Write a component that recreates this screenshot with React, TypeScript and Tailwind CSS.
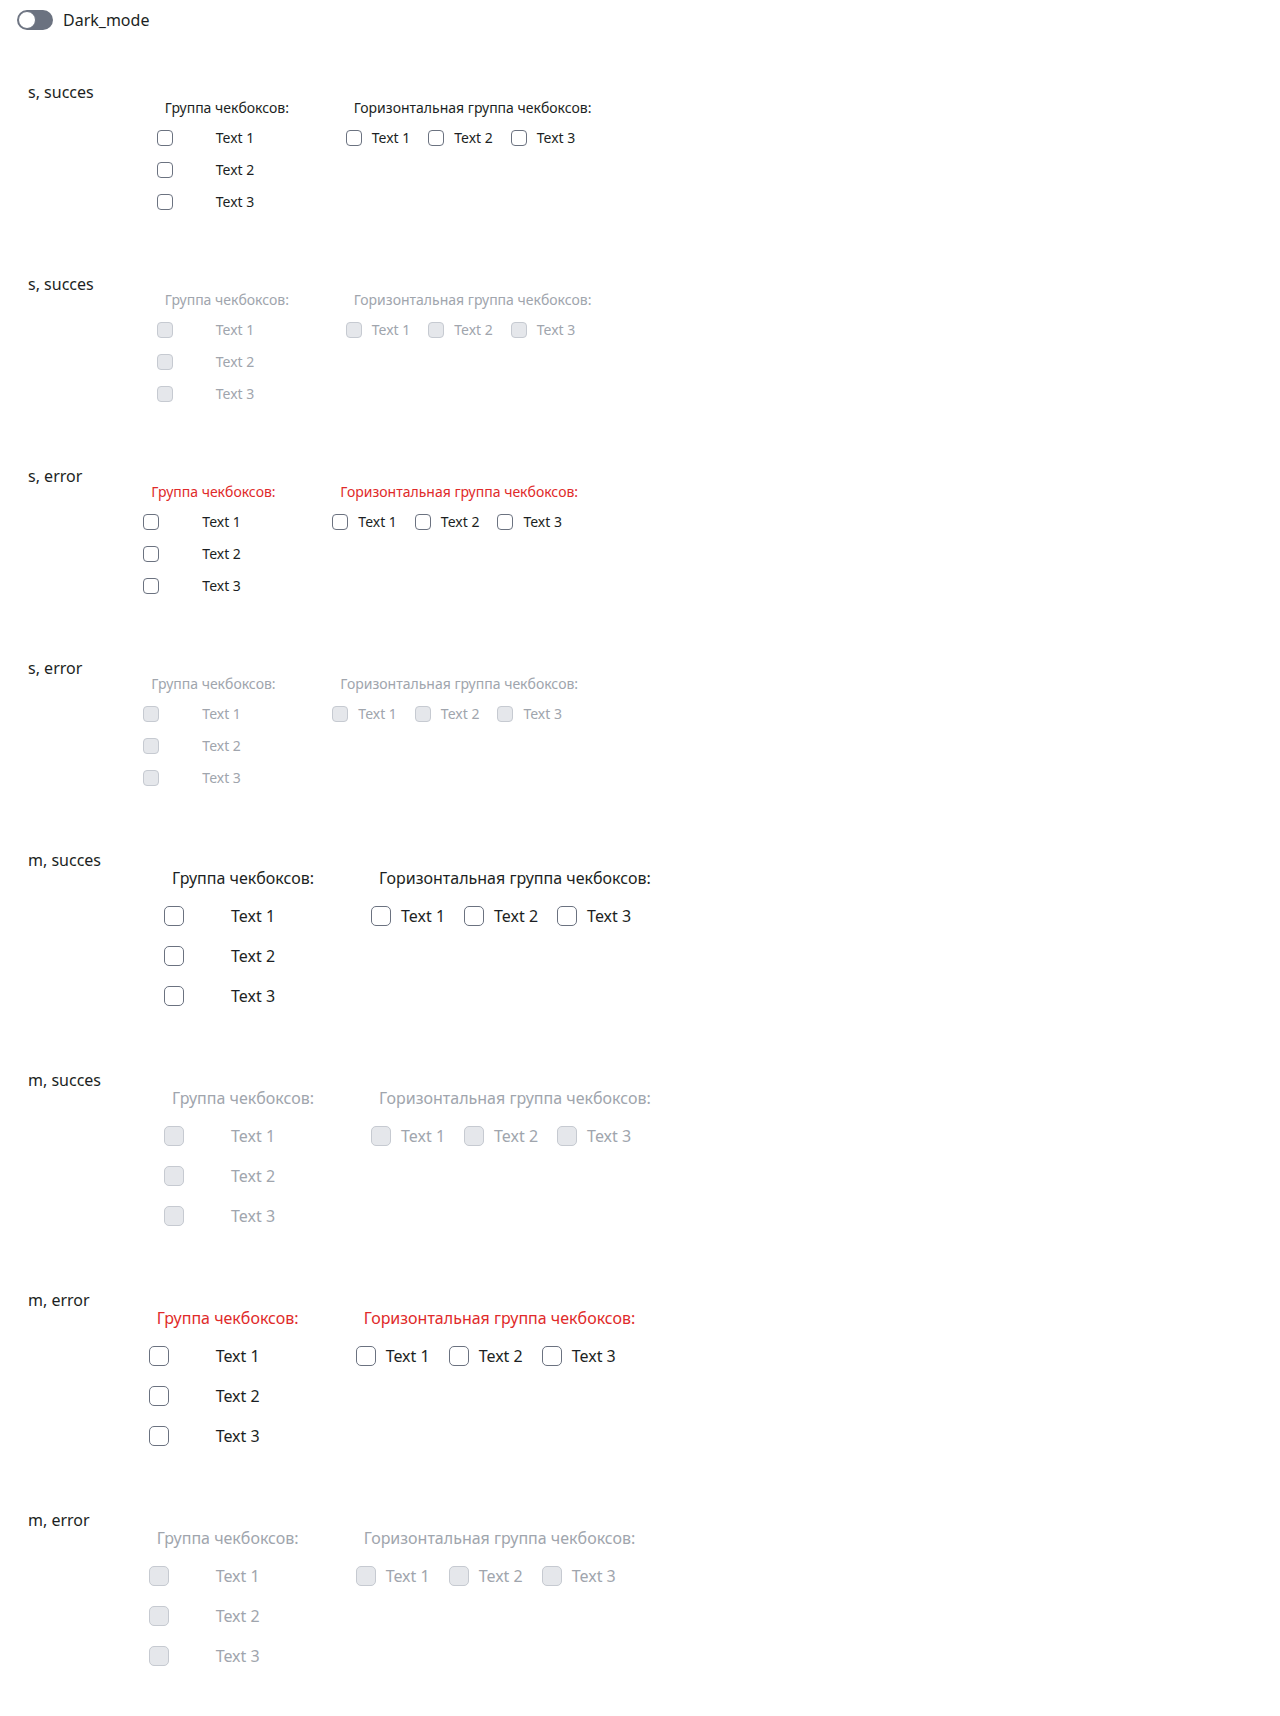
import { useState } from "react";

type Size = "s" | "m";

interface SectionProps {
  label: string;
  size: Size;
  error?: boolean;
  disabled?: boolean;
}

const items = ["Text 1", "Text 2", "Text 3"];

function Checkbox({ size, disabled }: { size: Size; disabled?: boolean }) {
  const sizeCls = size === "s" ? "w-4 h-4 rounded-[4px]" : "w-5 h-5 rounded-[5px]";
  const colorCls = disabled
    ? "bg-[#e5e7eb] border-[#c6cad1]"
    : "bg-white border-[#6b7280]";
  return (
    <input
      type="checkbox"
      disabled={disabled}
      className={`appearance-none shrink-0 border m-0 ${sizeCls} ${colorCls}`}
    />
  );
}

function CheckboxSection({ label, size, error, disabled }: SectionProps) {
  const isS = size === "s";
  const textCls = isS ? "text-sm leading-5" : "text-base leading-6";
  const titleColor = disabled
    ? "text-[#a0a5ad]"
    : error
    ? "text-[#e02a2a]"
    : "text-[#1c1f23]";
  const itemColor = disabled ? "text-[#a0a5ad]" : "text-[#1c1f23]";
  const labelGap = !error ? "mr-[63px]" : isS ? "mr-[61px]" : "mr-[59px]";

  return (
    <div className={`flex items-start ${isS ? "h-[192px]" : "h-[220px]"}`}>
      {/* Section label */}
      <div className={`text-base leading-6 whitespace-nowrap text-[#1c1f23] ${labelGap}`}>
        {label}
      </div>

      <div className="flex items-start mt-[18px]">
        {/* Vertical group */}
        <div className={`flex flex-col ${isS ? "w-[189px]" : "w-[207px]"}`}>
          <div
            className={`pl-2 whitespace-nowrap ${isS ? "mb-1" : "mb-[6px]"} ${textCls} ${titleColor}`}
          >
            Группа чекбоксов:
          </div>
          {items.map((t) => (
            <label
              key={t}
              className={`flex items-center ${isS ? "h-8" : "h-10"}`}
            >
              <Checkbox size={size} disabled={disabled} />
              <span
                className={`${isS ? "ml-[43px]" : "ml-[47px]"} ${textCls} ${itemColor}`}
              >
                {t}
              </span>
            </label>
          ))}
        </div>

        {/* Horizontal group */}
        <div className="flex flex-col">
          <div
            className={`pl-2 whitespace-nowrap ${isS ? "mb-1" : "mb-[6px]"} ${textCls} ${titleColor}`}
          >
            Горизонтальная группа чекбоксов:
          </div>
          <div
            className={`flex items-center ${isS ? "h-8 gap-[18px]" : "h-10 gap-[19px]"}`}
          >
            {items.map((t) => (
              <label key={t} className="flex items-center gap-[10px]">
                <Checkbox size={size} disabled={disabled} />
                <span className={`whitespace-nowrap ${textCls} ${itemColor}`}>{t}</span>
              </label>
            ))}
          </div>
        </div>
      </div>
    </div>
  );
}

export default function App() {
  const [dark, setDark] = useState(false);

  return (
    <div className="min-h-screen bg-white font-['Noto_Sans',sans-serif] text-[#1c1f23]">
      {/* Dark mode toggle */}
      <div className="pt-[8px] pl-[17px]">
        <button
          type="button"
          onClick={() => setDark(!dark)}
          className="flex items-center h-6 gap-[10px]"
        >
          <span className="relative w-9 h-5 rounded-full bg-[#6b7280] shrink-0">
            <span className="absolute left-px top-px w-[18px] h-[18px] rounded-full bg-white border border-[#6b7280]" />
          </span>
          <span className="text-base leading-6 text-[#1c1f23]">Dark_mode</span>
        </button>
      </div>

      {/* Sections */}
      <div className="mt-[48px] pl-7">
        <CheckboxSection label="s, succes" size="s" />
        <CheckboxSection label="s, succes" size="s" disabled />
        <CheckboxSection label="s, error" size="s" error />
        <CheckboxSection label="s, error" size="s" error disabled />
        <CheckboxSection label="m, succes" size="m" />
        <CheckboxSection label="m, succes" size="m" disabled />
        <CheckboxSection label="m, error" size="m" error />
        <CheckboxSection label="m, error" size="m" error disabled />
      </div>
    </div>
  );
}
